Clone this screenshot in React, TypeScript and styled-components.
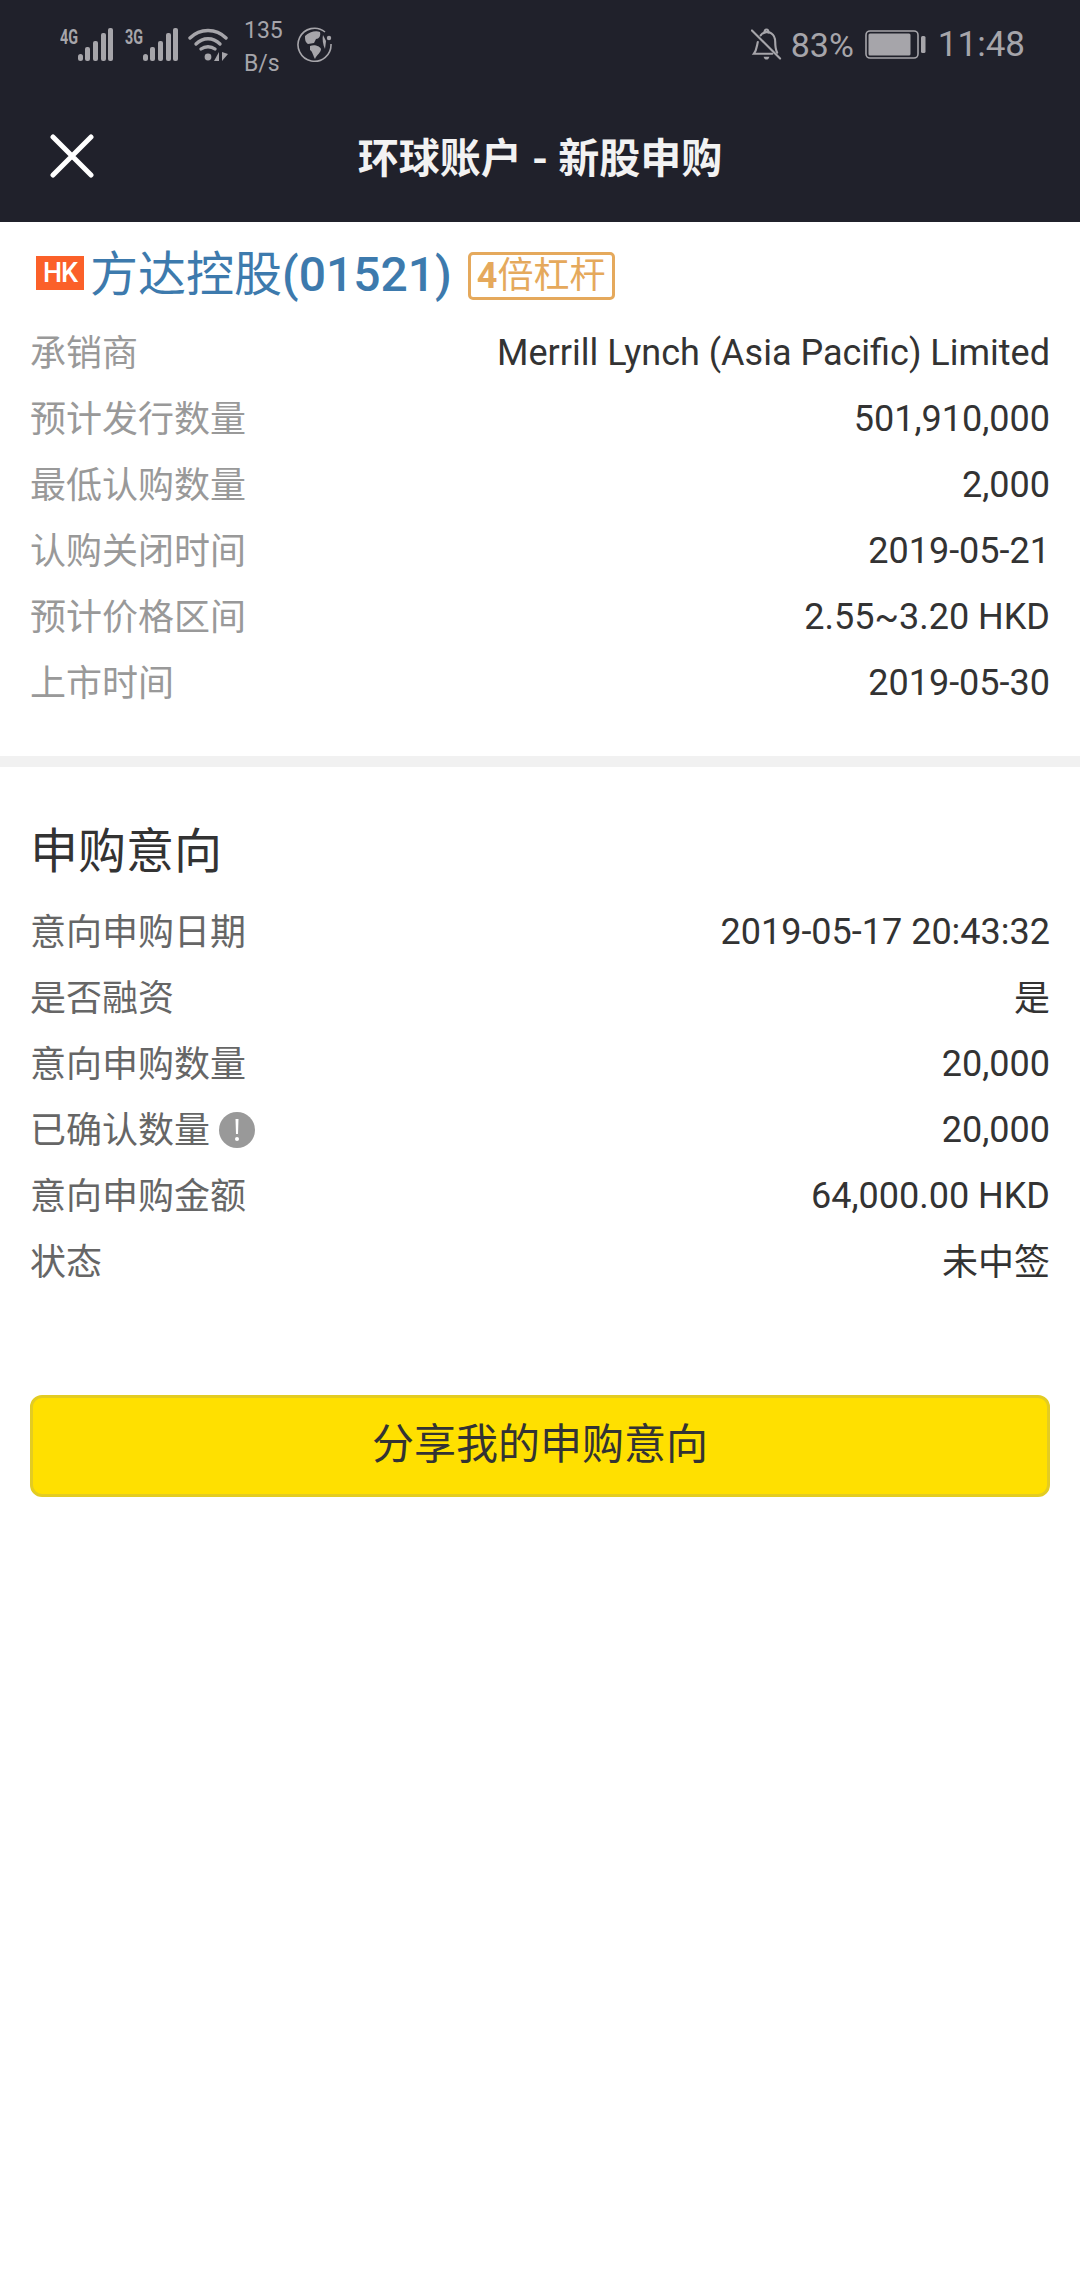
import React from "react";
import styled, { createGlobalStyle } from "styled-components";

const FONT = `Roboto, "Noto Sans CJK SC", sans-serif`;

const Global = createGlobalStyle`
  html, body { margin: 0; padding: 0; background: #fff; }
  body { font-family: ${FONT}; width: 1080px; height: 2280px; overflow: hidden; }
  * { box-sizing: border-box; }
`;

const Page = styled.div`
  width: 1080px;
  height: 2280px;
  background: #fff;
  display: flex;
  flex-direction: column;
`;
const Header = styled.header`
  background: #20212b;
  height: 222px;
  display: flex;
  flex-direction: column;
`;
const StatusBar = styled.div`
  height: 90px;
  display: flex;
  justify-content: space-between;
  align-items: flex-start;
  padding: 27px 55px 0 60px;
  color: #a6a5aa;
`;
const StatusGroup = styled.div`
  display: flex;
  align-items: center;
  height: 36px;
`;
const Speed = styled.div`
  font-size: 23px;
  line-height: 33px;
  width: 41px;
  margin: 0 12px 0 16px;
  position: relative;
  top: 2px;
`;
const StatusText = styled.span<{ $size: number }>`
  font-size: ${(p) => p.$size}px;
  line-height: 36px;
  color: #a6a5aa;
`;
const NavBar = styled.div`
  flex: 1;
  display: grid;
  grid-template-columns: 1fr auto 1fr;
  align-items: center;
  padding: 0 50px;
`;
const NavTitle = styled.h1`
  margin: 0 0 2px;
  font-size: 41px;
  font-weight: 700;
  color: #f2f2f2;
`;
const Sheet = styled.section<{ $pad: string }>`
  padding: ${(p) => p.$pad};
`;
const StockLine = styled.div`
  display: flex;
  align-items: center;
  height: 56px;
  margin-left: 6px;
`;
const Market = styled.span`
  width: 48px;
  height: 34px;
  margin: 0 6px 4px 0;
  background: #fb6029;
  color: #fff;
  font-size: 27px;
  font-weight: 500;
  letter-spacing: -1px;
  line-height: 34px;
  text-align: center;
`;
const StockName = styled.span`
  font-size: 48px;
  line-height: 56px;
  color: #3d7aad;
`;
const StockCode = styled.span`
  font-weight: 500;
`;
const Tag = styled.span`
  margin: 2px 0 0 16px;
  height: 48px;
  border: 3px solid #e5a95c;
  border-radius: 5px;
  padding: 0 6px;
  color: #e5a95c;
  font-size: 36px;
  line-height: 42px;
  display: flex;
`;
const TagNumber = styled.b`
  font-weight: 700;
`;
const Rows = styled.div<{ $top: number }>`
  display: flex;
  flex-direction: column;
  margin-top: ${(p) => p.$top}px;
`;
const Row = styled.div`
  height: 66px;
  display: flex;
  justify-content: space-between;
  align-items: center;
`;
const Label = styled.span<{ $muted?: boolean }>`
  font-size: 36px;
  color: ${(p) => (p.$muted ? "#999" : "#666")};
  display: flex;
  align-items: center;
  gap: 9px;
  margin-bottom: 6px;
`;
const Value = styled.span<{ $cjk?: boolean }>`
  font-size: 36px;
  color: #333;
  margin-bottom: ${(p) => (p.$cjk ? 6 : 0)}px;
`;
const Divider = styled.div`
  height: 11px;
  background: #f1f1f1;
`;
const SectionTitle = styled.h2`
  margin: 0;
  font-size: 48px;
  line-height: 60px;
  font-weight: 400;
  color: #333;
`;
const ShareButton = styled.button`
  display: block;
  width: 100%;
  height: 102px;
  margin-top: 100px;
  padding: 0 0 11px;
  background: #ffe000;
  border: 3px solid #e3cc22;
  border-radius: 12px;
  color: #333;
  font-family: ${FONT};
  font-size: 42px;
`;
const IconSlot = styled.span<{ $left?: number; $right?: number }>`
  display: flex;
  margin-left: ${(p) => p.$left ?? 0}px;
  margin-right: ${(p) => p.$right ?? 0}px;
`;
const SignalSvg = styled.svg`
  margin-top: -4px;
`;
const WarnSvg = styled.svg`
  margin-top: 6px;
`;

const Signal = ({ label }: { label: string }) => (
  <SignalSvg width="53" height="38" viewBox="0 -4 53 38">
    <text x="0" y="16" fontFamily="Roboto, sans-serif" fontWeight="700" fontSize="21" fill="#a6a5aa" textLength="18" lengthAdjust="spacingAndGlyphs">
      {label}
    </text>
    <rect x="18" y="26" width="5" height="7" rx="2.5" fill="#a6a5aa" />
    <rect x="25" y="19" width="5" height="14" rx="2" fill="#a6a5aa" />
    <rect x="33" y="13" width="5" height="20" rx="2" fill="#a6a5aa" />
    <rect x="41" y="5" width="5" height="28" rx="2" fill="#a6a5aa" />
    <rect x="48" y="0" width="5" height="33" rx="2" fill="#a6a5aa" />
  </SignalSvg>
);

const Wifi = () => (
  <svg width="40" height="34" viewBox="0 0 40 34" fill="none" stroke="#a6a5aa" strokeWidth="3.4" strokeLinecap="round">
    <path d="M2 10 C12 0 28 0 38 10" />
    <path d="M8 16 C15 9 25 9 32 16" />
    <path d="M13 21 C17 18 23 18 27 21" />
    <circle cx="20" cy="29" r="3.4" fill="#a6a5aa" stroke="none" />
    <path d="M31 24 V33 H26 Z" fill="#a6a5aa" stroke="none" />
    <path d="M34 24 V33 L40 26 Z" fill="#a6a5aa" stroke="none" />
  </svg>
);

const Globe = () => (
  <svg width="36" height="36" viewBox="0 0 36 36" fill="none">
    <path d="M28 5 A16.5 16.5 0 1 0 34 17" stroke="#a6a5aa" strokeWidth="1.6" />
    <circle cx="32" cy="11" r="2.2" fill="#a6a5aa" />
    <path d="M8 9 C12 5 19 3 23 5 C24 9 22 12 19 12 L17 16 L11 17 C8 15 8 12 8 9 Z" fill="#a6a5aa" />
    <path d="M13 19 C17 17 23 19 24 22 C24 26 20 27 18 32 C16 29 16 25 13 23 Z" fill="#a6a5aa" />
    <path d="M26 8 L29 14 L28 22 C26 18 25 12 26 8 Z" fill="#a6a5aa" />
  </svg>
);

const BellOff = () => (
  <svg width="31" height="34" viewBox="0 0 32 34" fill="none" stroke="#a6a5aa" strokeWidth="2.2" strokeLinecap="round">
    <path d="M1 2 L30 31" />
    <path d="M7 14 C6 18 6 22 3 26 H22" />
    <path d="M10 7 C13 3 18 3 21 5 C24 7 25 10 25 14 C25 18 25 21 27 25" />
    <path d="M14 4 C14 0 18 0 18 4" />
    <path d="M13 29 C14 33 18 33 19 29 Z" fill="#a6a5aa" stroke="none" />
  </svg>
);

const Battery = () => (
  <svg width="61" height="30" viewBox="0 0 61 30" fill="none">
    <rect x="1" y="1" width="52" height="27" rx="4" stroke="#a6a5aa" strokeWidth="1.6" />
    <rect x="3.5" y="3.5" width="42" height="22" rx="1.5" fill="#a6a5aa" />
    <rect x="56" y="6" width="4.5" height="17" rx="1.5" fill="#a6a5aa" />
  </svg>
);

const Close = () => (
  <svg width="44" height="44" viewBox="0 0 44 44" stroke="#fff" strokeWidth="5" strokeLinecap="round">
    <path d="M3 3 L41 41 M41 3 L3 41" />
  </svg>
);

const Warn = () => (
  <WarnSvg width="36" height="36" viewBox="0 0 36 36">
    <circle cx="18" cy="18" r="18" fill="#999" />
    <path d="M16.5 7 H19.5 L19 22 H17 Z" fill="#fff" />
    <circle cx="18" cy="27" r="2" fill="#fff" />
  </WarnSvg>
);

const info = [
  ["承销商", "Merrill Lynch (Asia Pacific) Limited"],
  ["预计发行数量", "501,910,000"],
  ["最低认购数量", "2,000"],
  ["认购关闭时间", "2019-05-21"],
  ["预计价格区间", "2.55~3.20 HKD"],
  ["上市时间", "2019-05-30"],
];
const intent = [
  { label: "意向申购日期", value: "2019-05-17 20:43:32" },
  { label: "是否融资", value: "是", cjk: true },
  { label: "意向申购数量", value: "20,000" },
  { label: "已确认数量", value: "20,000", warn: true },
  { label: "意向申购金额", value: "64,000.00 HKD" },
  { label: "状态", value: "未中签", cjk: true },
];

export default function App() {
  return (
    <Page>
      <Global />
      <Header>
        <StatusBar>
          <StatusGroup>
            <IconSlot $right={12}><Signal label="4G" /></IconSlot>
            <IconSlot $right={10}><Signal label="3G" /></IconSlot>
            <Wifi />
            <Speed>135<br />B/s</Speed>
            <Globe />
          </StatusGroup>
          <StatusGroup>
            <IconSlot $right={9}><BellOff /></IconSlot>
            <StatusText $size={34}>83%</StatusText>
            <IconSlot $left={11} $right={12}><Battery /></IconSlot>
            <StatusText $size={35}>11:48</StatusText>
          </StatusGroup>
        </StatusBar>
        <NavBar>
          <Close />
          <NavTitle>环球账户 - 新股申购</NavTitle>
        </NavBar>
      </Header>
      <Sheet $pad="25px 30px 40px">
        <StockLine>
          <Market>HK</Market>
          <StockName>方达控股<StockCode>(01521)</StockCode></StockName>
          <Tag><TagNumber>4</TagNumber>倍杠杆</Tag>
        </StockLine>
        <Rows $top={17}>
          {info.map(([k, v]) => (
            <Row key={k}>
              <Label $muted>{k}</Label>
              <Value>{v}</Value>
            </Row>
          ))}
        </Rows>
      </Sheet>
      <Divider />
      <Sheet $pad="55px 30px 0">
        <SectionTitle>申购意向</SectionTitle>
        <Rows $top={17}>
          {intent.map((r) => (
            <Row key={r.label}>
              <Label>{r.label}{r.warn ? <Warn /> : null}</Label>
              <Value $cjk={r.cjk}>{r.value}</Value>
            </Row>
          ))}
        </Rows>
        <ShareButton>分享我的申购意向</ShareButton>
      </Sheet>
    </Page>
  );
}
